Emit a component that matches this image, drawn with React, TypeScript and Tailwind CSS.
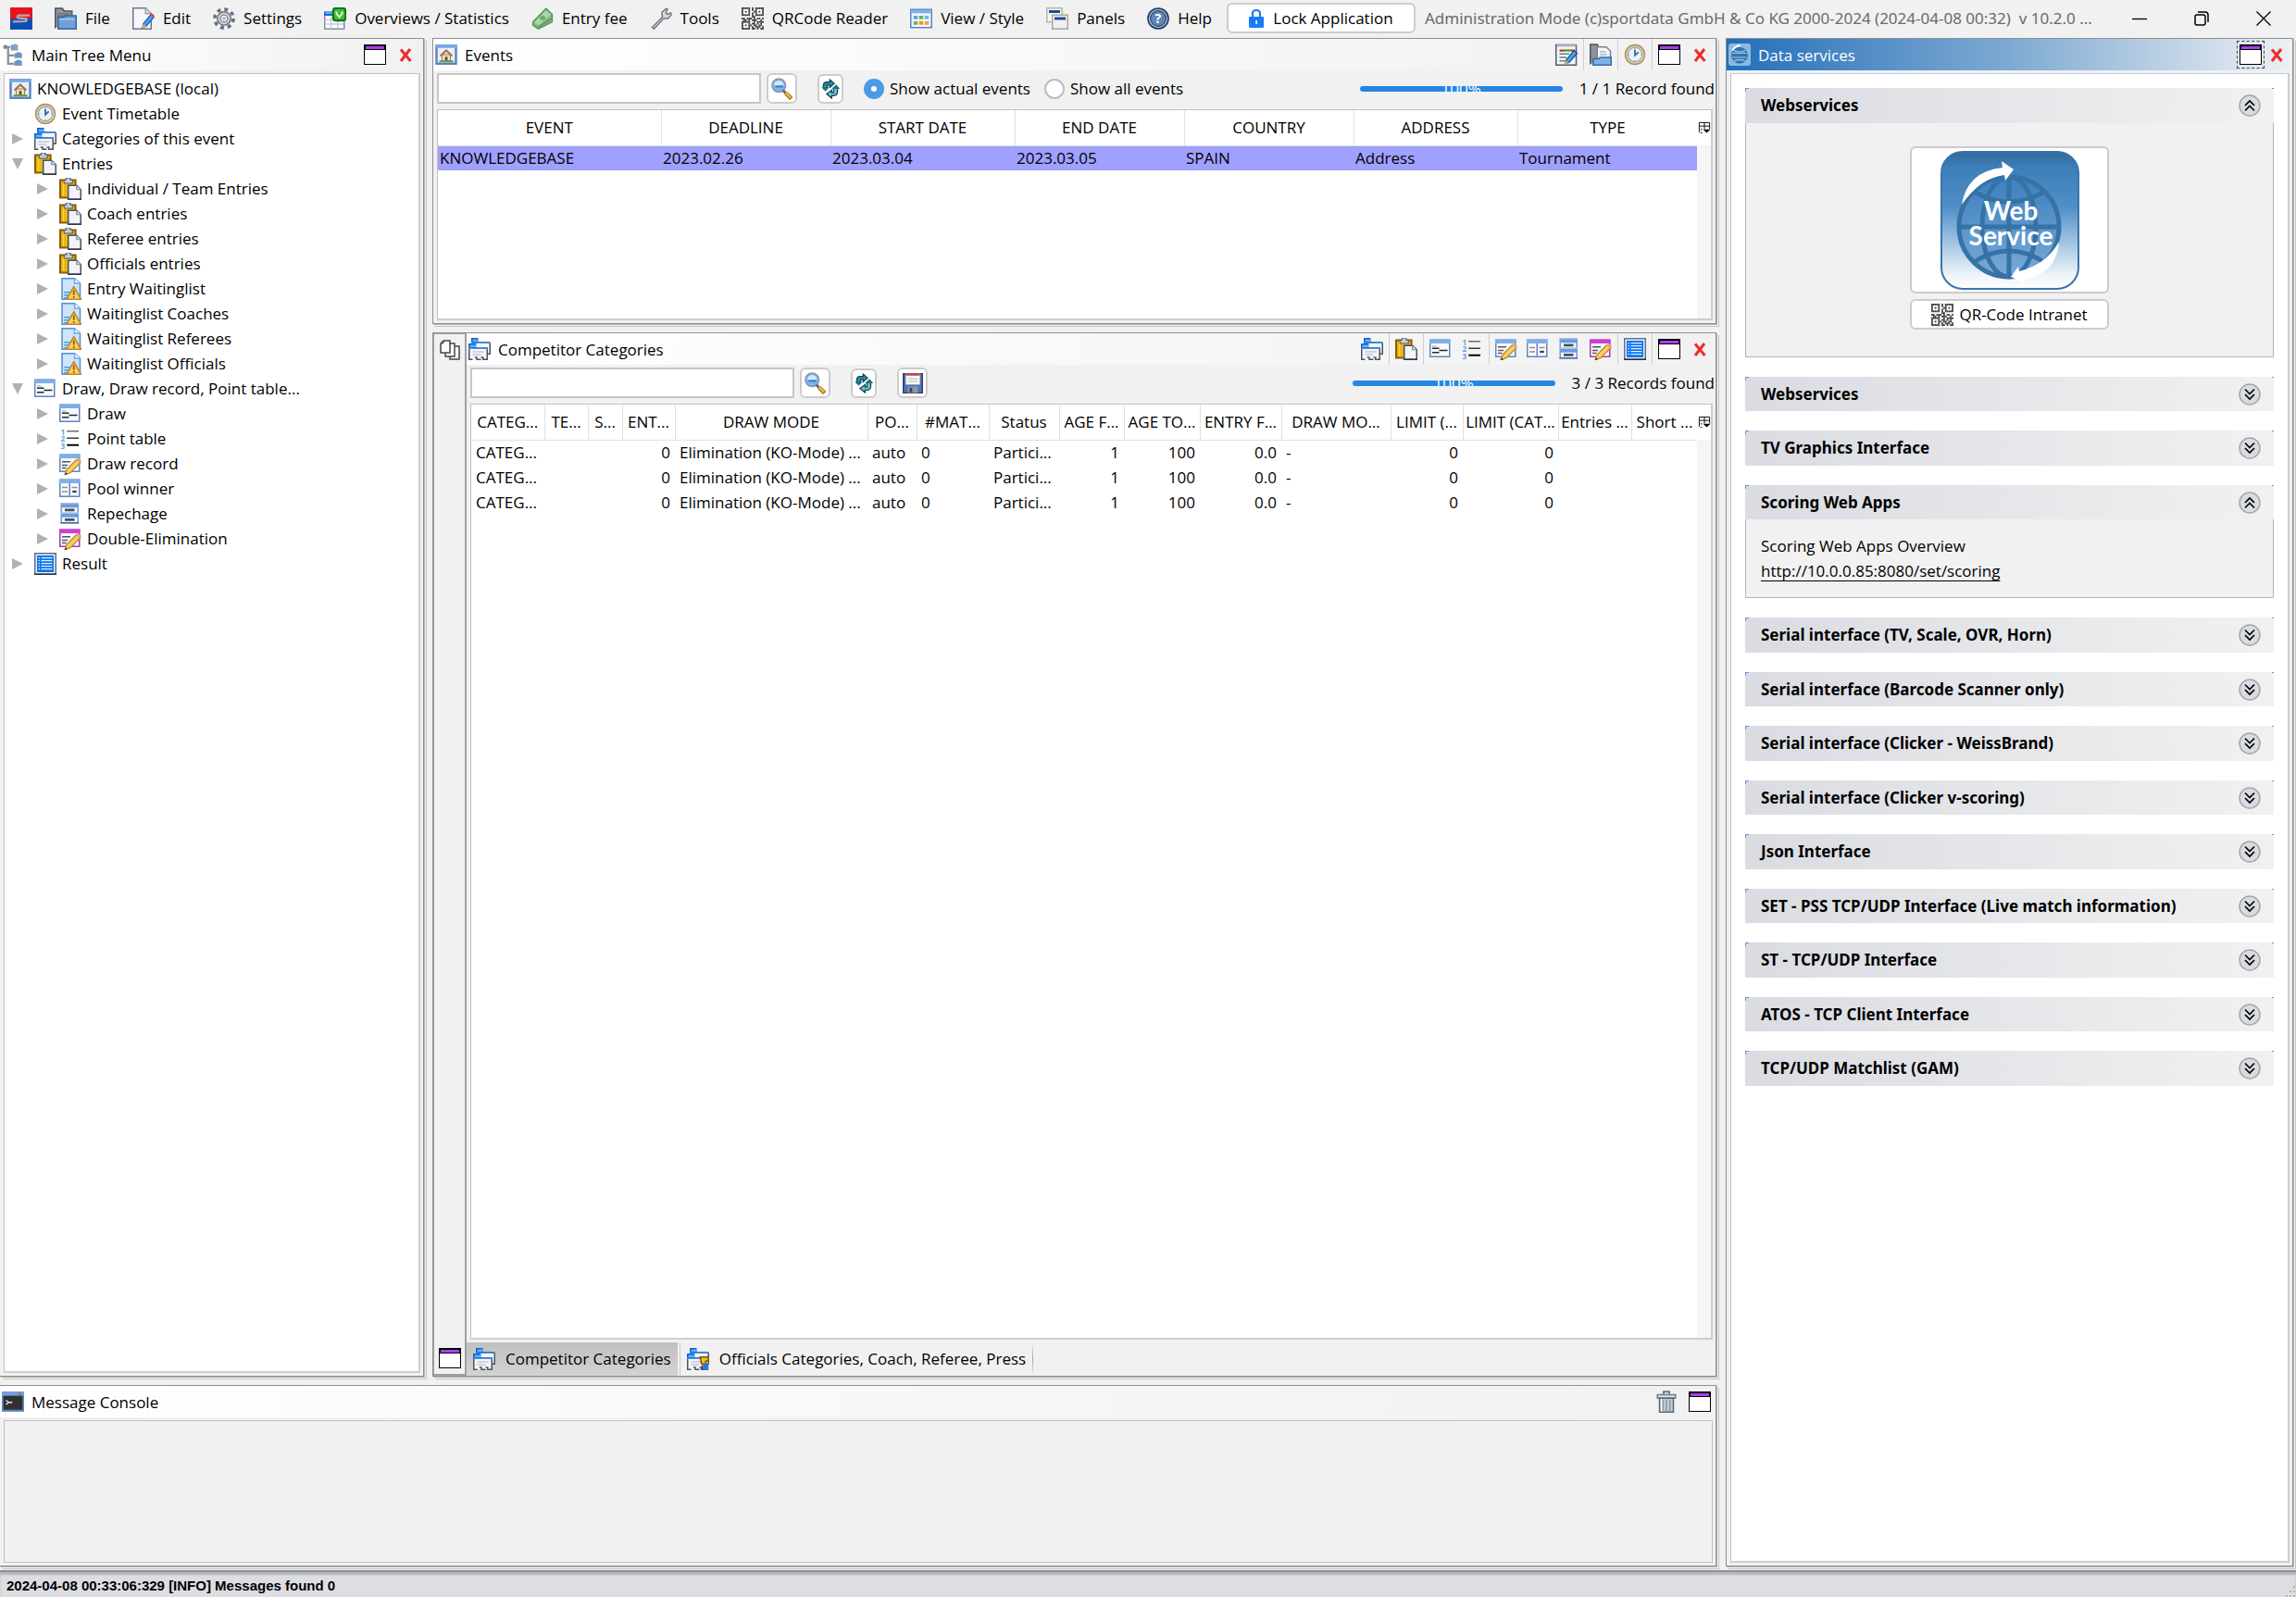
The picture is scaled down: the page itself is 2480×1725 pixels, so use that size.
import React from 'react';

type IconType = React.ComponentType;

/* ---------- icons ---------- */

const Svg = ({ children, size = 'size-6', box = '0 0 16 16' }: {
  children: React.ReactNode;
  size?: string;
  box?: string;
}) => (
  <svg viewBox={box} className={`${size} shrink-0`} aria-hidden="true">{children}</svg>
);

const LogoIcon = () => (
  <Svg>
    <rect width="16" height="8" fill="#e8141b" />
    <rect y="8" width="16" height="8" fill="#0a50b4" />
    <path d="M14 5.700 6.500 5.700Q4.500 6 5.500 7.600l6 .6Q12.500 9.200 11 10L2 10.200" fill="none" stroke="#b9a7ab" strokeWidth="1.500" />
  </Svg>
);

const FolderIcon = () => (
  <Svg>
    <path d="M.5 15V.7h5l1.500 2h5.500V6" fill="#8d949c" stroke="#4d545c" />
    <path d="M2 4.500h9M2 6h9" stroke="#6f767e" />
    <path d="M2.500 15.500V7h4l1-1h8v9.500z" fill="#6f9fd4" stroke="#37669f" />
    <path d="M3.500 8.500h11" stroke="#a9cbef" />
  </Svg>
);

const EditIcon = () => (
  <Svg>
    <path d="M.5.5h9l4 4v11H.5z" fill="#f5f7fa" stroke="#6d7684" />
    <path d="M9.500.5v4h4" fill="#d5dbe3" stroke="#9aa3b0" />
    <path d="M7 15l1-3.500L13.500 5l2 2L10 13.500z" fill="#4aa3ee" stroke="#1a5da8" strokeWidth=".8" />
    <path d="M13 5.500l1-1.300 2 1.800-1 1.400z" fill="#e0433a" />
    <path d="M6.500 15.500l1.300-3.500 2.200 1.900z" fill="#f0b04a" />
  </Svg>
);

const GearIcon = () => (
  <Svg>
    <circle cx="8" cy="8" r="6.700" fill="none" stroke="#68707c" strokeWidth="2.400" strokeDasharray="2.600 2.660" />
    <circle cx="8" cy="8" r="4.800" fill="#d3d8e0" stroke="#68707c" strokeWidth="1" />
    <circle cx="8" cy="8" r="2.600" fill="#eef1f5" stroke="#7c8591" strokeWidth=".9" />
    <circle cx="8" cy="8" r="1.200" fill="#aab2be" />
  </Svg>
);

const OverviewIcon = () => (
  <Svg>
    <path d="M.5 3.500h14v12H.5z" fill="#fff" stroke="#7f8da3" />
    <path d="M0 3h8v3H0z" fill="#1b6bd0" />
    <path d="M1 4h5" stroke="#8fc1f5" />
    <path d="M1 9h13M1 12h13M5 7v8M10 8v7" stroke="#c3cedd" />
    <rect x="6.500" y=".5" width="9" height="9" rx="2" fill="#3fb93b" stroke="#0f6d15" strokeWidth="1.300" />
    <path d="M9 3v1.500l2 2.500 2-2.500V3" fill="none" stroke="#d9ffd5" strokeWidth="1.300" />
  </Svg>
);

const FeeIcon = () => (
  <Svg>
    <path d="M1 10.500L10.500.8 15 5v5.500L5 15.500 1 13z" fill="#7fb67f" stroke="#4f8f55" strokeWidth=".8" />
    <path d="M2 10.700L10.500 2 14 5.200 5 13.200z" fill="#a9d6a5" />
    <ellipse cx="8" cy="7.500" rx="2" ry="1.700" fill="#6fa972" />
    <path d="M5 14.200l9.500-6" stroke="#4f8f55" strokeWidth=".7" />
  </Svg>
);

const WrenchIcon = () => (
  <Svg>
    <path d="M1.500 14.500L9 7 8.600 3.500 11.500 1l1.200.2-1.200 2.600 1 1.200L15 4l.4 1.400L13 8l-3-.1L3 15.500z" fill="#d6dae0" stroke="#6c727c" strokeWidth=".9" />
  </Svg>
);

const QR_ROWS = [
  '1111101011111', '1000101010001', '1010100110101', '1000101010001', '1111101011111',
  '0000001100000', '1101110101101', '0110101110010', '1111100101111', '1000101101010',
  '1010110110110', '1000101011101', '1111101101011',
];

const QrIcon = () => (
  <Svg box="0 0 13 13">
    <rect width="13" height="13" fill="#fff" />
    {QR_ROWS.map((row, y) =>
      row.split('').map((c, x) =>
        c === '1' ? <rect key={`${x}-${y}`} x={x} y={y} width="1" height="1" fill="#3a3a3a" /> : null
      )
    )}
  </Svg>
);

const ViewIcon = () => (
  <Svg>
    <rect x=".5" y="1.500" width="15" height="13" fill="#f3f7fd" stroke="#5b83c4" />
    <path d="M1 3h14" stroke="#7fb1ec" strokeWidth="2.500" />
    <path d="M2.500 6h3v2.500h-3z" fill="#5aa0e6" />
    <path d="M6.500 6h3v2.500h-3z" fill="#72ad4f" />
    <path d="M10.500 6h3v2.500h-3z" fill="#6fb6f0" />
    <path d="M2.500 10h3v2.500h-3z" fill="#6fb35a" />
    <path d="M6.500 10h3v2.500h-3z" fill="#ef8b2c" />
    <path d="M10.500 10h3v2.500h-3z" fill="#f0a13c" />
  </Svg>
);

const PanelsIcon = () => (
  <Svg>
    <rect x=".5" y=".5" width="11" height="10" fill="#f6f6f4" stroke="#b4b6a8" />
    <path d="M2 3h8" stroke="#1f4a94" strokeWidth="2" />
    <rect x="4.500" y="5.500" width="11" height="10" fill="#eef0f3" stroke="#a5a89c" />
    <path d="M6 8h8" stroke="#1f4a94" strokeWidth="2" />
  </Svg>
);

const HelpIcon = () => (
  <Svg>
    <circle cx="8" cy="8" r="7.300" fill="#cfd8e6" stroke="#27406b" strokeWidth="1.200" />
    <circle cx="8" cy="8" r="5.600" fill="#5f86bd" stroke="#27406b" strokeWidth=".8" />
    <text x="8" y="11.400" textAnchor="middle" fontSize="9.500" fontWeight="700" fill="#fff">?</text>
  </Svg>
);

const LockIcon = () => (
  <svg viewBox="0 0 16 22" className="h-[22px] w-4 shrink-0" aria-hidden="true">
    <path d="M4 10V5.500Q4 2 8 2t4 3.500V10" fill="none" stroke="#1a7cf5" strokeWidth="2.200" />
    <rect x="0" y="9" width="16" height="12" rx="1" fill="#1a7cf5" />
    <path d="M7.300 13h1.600v4H7.300z" fill="#fff" />
  </svg>
);

const TreeIcon = () => (
  <Svg>
    <path d="M4.500 2v12.500H9M4.500 8.500H9M2 2.500h4" fill="none" stroke="#8a9097" strokeWidth="1.500" />
    <circle cx="2.500" cy="2.500" r="1.500" fill="#7c838c" />
    <path d="M6.500 1h5v4h-5zM9 7h5.500v3.500H9zM9 12.500h5.500V16H9z" fill="#8b959f" />
    <circle cx="9.500" cy="2.300" r="2" fill="#7ba7d6" />
    <circle cx="12" cy="8" r="1.900" fill="#5d95d3" />
    <circle cx="12" cy="13.500" r="1.900" fill="#5d95d3" />
  </Svg>
);

const HomeIcon = () => (
  <Svg>
    <rect x="1" y="1.500" width="14" height="13" fill="#e6f1fb" stroke="#5b7fbd" strokeWidth="1.600" />
    <path d="M.2 2h15.600" stroke="#79aae6" strokeWidth="2.400" />
    <path d="M5 12.500V8h6v4.500z" fill="#f2e6cf" stroke="#a5793c" strokeWidth=".7" />
    <path d="M3.800 9L8 5l4.200 4" fill="none" stroke="#a8713f" strokeWidth="1.400" />
    <path d="M7 9.500h2v3H7z" fill="#7a4e24" />
    <path d="M3 12.800h10" stroke="#5aa355" strokeWidth="1.400" />
  </Svg>
);

const ClockIcon = () => (
  <Svg>
    <circle cx="8" cy="8" r="7" fill="#e4d2a4" stroke="#a98d5a" strokeWidth=".9" />
    <circle cx="8" cy="8" r="5.200" fill="#eaf3fb" stroke="#9aa9bd" strokeWidth=".8" />
    <path d="M8 4.500V8.500l2.500-2.300" fill="none" stroke="#44658f" strokeWidth="1.200" />
    <path d="M8 3.200v1M8 12v1M3.200 8h1M12 8h1" stroke="#7f93ad" strokeWidth=".8" />
  </Svg>
);

const FoldersBase = () => (
  <>
    <path d="M2.500 3.500h13v8h-3z" fill="#f4f6f9" />
    <path d="M15.500 3.500v8h-2" fill="none" stroke="#4b5462" />
    <path d="M2 0h5v3H2z" fill="#0d62cf" />
    <path d="M3 1h4v2H3z" fill="#57b4fb" />
    <path d="M2 3.300h13.500" stroke="#0d62cf" />
    <path d="M.5 7h13v8.500H.5z" fill="#f4f6f9" />
    <path d="M.5 8v7.500h2.500M4.500 14h1.500v1.500h3M9 14h1.500v1.500h3V8" fill="none" stroke="#4b5462" />
    <path d="M0 4h5.500v3H0z" fill="#0d62cf" />
    <path d="M1 5h4.500v2H1z" fill="#57b4fb" />
    <path d="M0 7.300h14" stroke="#0d62cf" />
    <path d="M3 10h8M3 12h6" stroke="#c0c8d3" />
  </>
);

const FoldersIcon = () => <Svg><FoldersBase /></Svg>;

const OfficialsIcon = () => (
  <Svg>
    <FoldersBase />
    <path d="M9.500 6.500h6v3h-2v2h-3z" fill="#f3c313" stroke="#7c4f0a" strokeWidth="1" />
    <path d="M11.500 11.500h4v4.500h-4z" fill="#2a76d8" />
    <path d="M11 15.500v-3" stroke="#3a424e" />
  </Svg>
);

const ClipboardIcon = () => (
  <Svg>
    <path d="M.7 1.700h11v12.600H.7z" fill="#e9b40f" stroke="#8d5c04" strokeWidth="1.400" />
    <path d="M3 3v10" stroke="#f8d54c" />
    <path d="M3.500 1.500h1.500V0h3v1.500h1.500V4h-6z" fill="#c9ced6" stroke="#586070" strokeWidth=".8" />
    <path d="M6.500 5.500h6l3 3v7h-9z" fill="#f2f4f9" stroke="#485063" />
    <path d="M12.500 5.500v3h3" fill="#d4dae4" stroke="#8089a0" strokeWidth=".8" />
    <path d="M6 15.500h10" stroke="#2e3546" />
  </Svg>
);

const WaitIcon = () => (
  <Svg>
    <path d="M2 .5h9l4 3.500v11.500H2z" fill="#cfe3fa" stroke="#4f8fcf" />
    <path d="M11 .5v3.500h4" fill="#f2f8ff" stroke="#6fa8e0" />
    <path d="M3.500 10.500h4M3.500 12.500h3M3.500 14.500h2" stroke="#35a0e8" />
    <path d="M10.500 6.500L15.700 15.500H5.200z" fill="#f7d164" stroke="#c08424" />
    <path d="M10.500 9v3.500M10.500 13.300v1.200" stroke="#8c5f12" strokeWidth="1.200" />
  </Svg>
);

const WinFrame = ({ pink = false }: { pink?: boolean }) => (
  <>
    <rect x=".5" y="1.500" width="14" height="12" fill="#f8fafd" stroke={pink ? '#a63aa6' : '#6183c4'} />
    <path d="M0 2.500h15" stroke={pink ? '#cf3fd0' : '#80aee6'} strokeWidth="3" />
  </>
);

const Pencil = () => (
  <>
    <path d="M4 15.700L5.500 12 12.500 5l2.700 2.200L8 14.500z" fill="#f6cf61" stroke="#c08a3c" strokeWidth=".9" />
    <path d="M12 5.300l1.500-1.300 2.500 1.800-1 1.600z" fill="#e7a67a" />
    <path d="M4 16l.7-1.700L6 15.500z" fill="#3a2a14" />
  </>
);

const DrawIcon = () => (
  <Svg>
    <WinFrame />
    <path d="M2 7.500h5M2 10.500h5M7 9h6" stroke="#23282f" strokeWidth=".9" />
    <path d="M2 6h3" stroke="#a8aeb8" strokeWidth=".8" />
  </Svg>
);

const ListIcon = () => (
  <Svg>
    <text x="1" y="5" fontSize="5.500" fontWeight="700" fill="#6a9fdf">1</text>
    <text x="1" y="10" fontSize="5.500" fontWeight="700" fill="#6a9fdf">2</text>
    <text x="1" y="15" fontSize="5.500" fontWeight="700" fill="#6a9fdf">3</text>
    <path d="M5.500 2.500H14" stroke="#6a6a6a" />
    <path d="M5.500 7.500H14" stroke="#3c3c3c" />
    <path d="M5.500 12.500H14" stroke="#000" strokeWidth="1.300" />
  </Svg>
);

const RecordIcon = () => (
  <Svg>
    <WinFrame />
    <path d="M2 6.500h6M2 9h4M2 11h3" stroke="#50565f" />
    <Pencil />
  </Svg>
);

const PoolIcon = () => (
  <Svg>
    <WinFrame />
    <path d="M7.500 4v9" stroke="#6183c4" />
    <path d="M2 7h4M2 10h4M9 7h4" stroke="#8b9098" />
    <path d="M9.500 10h3" stroke="#3b3f46" strokeWidth="1.500" />
  </Svg>
);

const RepechageIcon = () => (
  <Svg>
    <rect x="1" y="0" width="13" height="15" fill="#6e9bd8" />
    <path d="M1 .5h13M1 7.500h13" stroke="#9cc2ef" />
    <path d="M2 3.500h11V7H2zM2 10.500h11V14H2z" fill="#f4f8fd" />
    <path d="M4 5.200h7M4 12.200h7" stroke="#4a4e55" strokeWidth="1.800" />
    <path d="M1 14.500h13" stroke="#4466a8" />
  </Svg>
);

const DoubleIcon = () => (
  <Svg>
    <WinFrame pink />
    <path d="M2 6.500h6M2 9h4M2 11h3" stroke="#50565f" />
    <Pencil />
  </Svg>
);

const ResultIcon = () => (
  <Svg>
    <rect x=".5" y=".5" width="15" height="15" fill="#e8f1fb" stroke="#5f6f86" />
    <path d="M0 15.500h16" stroke="#26303f" />
    <rect x="2" y="2" width="12" height="12" fill="#0b74ef" />
    <path d="M5 3.700h8M5 5.700h8M5 7.700h8M5 9.700h8M5 11.700h8" stroke="#e2f0ff" strokeWidth=".8" />
    <path d="M3 3.700h1M3 5.700h1M3 7.700h1M3 9.700h1M3 11.700h1" stroke="#e2f0ff" strokeWidth=".8" />
  </Svg>
);

const WindowIcon = () => (
  <svg viewBox="0 0 24 22" className="h-[22px] w-6 shrink-0" aria-hidden="true">
    <rect width="24" height="22" fill="#000" />
    <rect x="2" y="2" width="20" height="3" fill="#ae3cf0" />
    <rect x="1" y="6" width="22" height="15" fill="#fff" />
  </svg>
);

const CloseIcon = () => (
  <svg viewBox="0 0 14 15" className="h-[15px] w-3.5 shrink-0" aria-hidden="true">
    <path d="M2 1.500l10.500 12.500M12 1L2 14" stroke="#ee2b2b" strokeWidth="3" />
  </svg>
);

const TableEditIcon = () => (
  <Svg>
    <rect x=".5" y="1" width="14.500" height="14.500" fill="#f2f5f9" stroke="#4e5a6b" />
    <path d="M1 1.500h14" stroke="#aab4c2" strokeWidth="1.500" />
    <path d="M3 5h3M11 5h3" stroke="#d5281f" strokeWidth="1.500" />
    <path d="M6 5h5" stroke="#2fa32b" strokeWidth="1.500" />
    <path d="M3 7.500h7M3 10h5M3 12.500h4" stroke="#6b7789" />
    <path d="M7 14.500l1-3L13.500 5 15.700 7 10 13.500z" fill="#49a2ee" stroke="#174f93" strokeWidth=".8" />
    <path d="M6 15.500l1.500-3 1.700 1.500z" fill="#f0b04a" />
  </Svg>
);

const FolderDocIcon = () => (
  <Svg>
    <path d="M.5 15V.7h5l1 2h4V9" fill="#8d949c" stroke="#4d545c" />
    <path d="M5.500 2.500h6.500l3 3V12H5.500z" fill="#f3f5f8" stroke="#7b8492" />
    <path d="M7.500 6h4M7.500 8h5" stroke="#aab2bd" />
    <path d="M2.500 15.500V11h4l1-1h8v5.500z" fill="#7fb0e6" stroke="#3a6aa6" />
  </Svg>
);

const StackIcon = () => (
  <svg viewBox="0 0 22 22" className="size-[22px] shrink-0" aria-hidden="true">
    <path d="M11 7h10v14H11z" fill="#fff" stroke="#444" strokeWidth="1.500" />
    <path d="M6 4h10v14H6z" fill="#fff" stroke="#444" strokeWidth="1.500" />
    <path d="M4 1h7v13H1V4z" fill="#fff" stroke="#444" strokeWidth="1.500" />
    <path d="M1 4h3V1" fill="none" stroke="#444" />
  </svg>
);

const ColumnsIcon = () => (
  <svg viewBox="0 0 15 15" className="size-3.5 shrink-0" aria-hidden="true">
    <path d="M1.500 13V1.500h12V9M1.500 5.500h12M7.500 1.500V9M3 9.500h2M3 13.500h2" fill="none" stroke="#000" />
    <path d="M6 9.500h8.500l-4.300 4z" fill="#000" />
  </svg>
);

const SearchIcon = () => (
  <Svg>
    <circle cx="5.500" cy="5.500" r="4.800" fill="#7fb2f0" stroke="#8d97ad" strokeWidth="1.200" />
    <path d="M2 5.500a3.500 3.500 0 0 1 7 0z" fill="#d6e8fb" />
    <path d="M3 6.300h5.500" stroke="#2f78d8" strokeWidth="1.200" />
    <path d="M8.500 9l2 2.200" stroke="#5b6377" strokeWidth="2" />
    <path d="M10.500 11l4 4" stroke="#9b6a10" strokeWidth="3" />
    <path d="M10.500 10.800l3.600 3.700" stroke="#f2c234" strokeWidth="1.600" />
  </Svg>
);

const RefreshIcon = () => (
  <Svg size="size-[22px]">
    <path d="M2.500 8V4.500Q3 2.700 5 2.700h2.500V.8l3.500 3-3.500 3V5H5.500v3z" fill="#2d8ca3" stroke="#0c4250" strokeWidth=".9" />
    <path d="M13.500 7v3.500q-.5 2.800-2.500 2.800H9v2L5 12l4-3v2h1.500V7z" fill="#6fc3d2" stroke="#0c4250" strokeWidth=".9" />
    <path d="M1 6.500h6L4 10z" fill="#1d6f85" />
    <path d="M9 8l3.500-3.500L15.500 8z" fill="#1d6f85" />
  </Svg>
);

const FloppyIcon = () => (
  <Svg size="size-[22px]">
    <rect x=".5" y=".5" width="15" height="15" fill="#5273b4" stroke="#2c3b66" />
    <rect x="2.500" y="0" width="11" height="9" fill="#fbfbfb" />
    <path d="M2.500 1h11" stroke="#b44c4c" strokeWidth="2" />
    <path d="M4 4.500h8M4 6.500h8" stroke="#c8ccd2" />
    <rect x="4" y="10.500" width="8" height="5" fill="#8d95a5" />
    <rect x="5.500" y="11.500" width="2" height="3.500" fill="#38435c" />
  </Svg>
);

const TerminalIcon = () => (
  <Svg>
    <rect x=".5" y="1.500" width="15" height="13" fill="#303030" stroke="#5b83c4" strokeWidth="1.400" />
    <path d="M0 2.500h16" stroke="#6f9fdd" strokeWidth="2.500" />
    <circle cx="13" cy="2.500" r=".8" fill="#e2503c" />
    <path d="M3 7l2 1.500L3 10M5.500 8.500h2" fill="none" stroke="#ededed" strokeWidth=".9" />
  </Svg>
);

const TrashIcon = () => (
  <Svg>
    <path d="M6 2.500V.8h4v1.700" fill="none" stroke="#6c7683" strokeWidth="1.300" />
    <path d="M1.500 3h13v2.500h-13z" fill="#dde3ea" stroke="#6f7a88" />
    <path d="M3 5.500h10V15.500H3z" fill="#c2ccd7" stroke="#5b6675" />
    <path d="M5.500 6.500v8M8 6.500v8M10.500 6.500v8" stroke="#8d9bab" strokeWidth="1.100" />
    <path d="M4.400 6v9" stroke="#f4f7fa" />
  </Svg>
);

const GlobeIcon = () => (
  <Svg>
    <rect width="16" height="16" rx="2" fill="#8db9e0" />
    <circle cx="8" cy="8.500" r="6" fill="#2f74b3" />
    <path d="M3 7h10M3 10h10M4 5.200q4 1.600 8 0M4 12.500q4-1.600 8 0" fill="none" stroke="#a7cbeb" strokeWidth=".8" />
    <path d="M3 5Q4.500 1.500 8.500 1.500" fill="none" stroke="#fff" strokeWidth="1.300" />
  </Svg>
);

const WebServiceLogo = () => (
  <svg viewBox="0 0 150 150" className="size-[150px]" role="img" aria-label="Web Service">
    <defs>
      <linearGradient id="sky" x1="0" y1="0" x2="0" y2="1">
        <stop offset="0" stopColor="#35699b" />
        <stop offset=".12" stopColor="#3d7fba" />
        <stop offset=".4" stopColor="#4f8fc8" />
        <stop offset=".9" stopColor="#eef4fa" />
        <stop offset="1" stopColor="#fff" />
      </linearGradient>
      <linearGradient id="sea" x1="0" y1="0" x2="0" y2="1">
        <stop offset="0" stopColor="#3c7fbd" />
        <stop offset="1" stopColor="#7aa9d8" />
      </linearGradient>
    </defs>
    <rect x="1" y="1" width="148" height="148" rx="23" fill="url(#sky)" stroke="#3a74aa" strokeWidth="2" />
    <circle cx="74" cy="82" r="54" fill="url(#sea)" stroke="#3572a6" strokeWidth="5" />
    <g fill="none" stroke="#3572a6" strokeWidth="5">
      <path d="M74 28v108M20 82h108" />
      <path d="M36 44q38 22 76 0M36 120q38-24 76 0" />
      <ellipse cx="74" cy="82" rx="29" ry="54" />
    </g>
    <path d="M23 58Q29 22 67 18l-1-7 13 9-9 12-1-6Q43 29 23 58z" fill="#fff" />
    <path d="M128 98q-2 34-38 41l1 4-15-7 8-11 1 5q29-7 43-32z" fill="#fff" />
    <text textAnchor="middle" fontFamily="Lato, sans-serif" fontSize="28" fontWeight="700" fill="#fff">
      <tspan x="76" y="75">Web</tspan>
      <tspan x="76" y="102">Service</tspan>
    </text>
  </svg>
);

const ChevronBadge = ({ open }: { open: boolean }) => (
  <svg viewBox="0 0 24 24" className="size-6 shrink-0" aria-hidden="true">
    <circle cx="12" cy="12" r="11" fill="#d9dbe2" stroke="#a6a6a8" strokeWidth="1.500" />
    <path
      d={open ? 'M7 12l5-5 5 5M7 17.500l5-5 5 5' : 'M7 6.500l5 5 5-5M7 12l5 5 5-5'}
      fill="none"
      stroke="#000"
      strokeWidth="1.700"
    />
  </svg>
);

/* ---------- data ---------- */

const menuItems: { label: string; icon: IconType }[] = [
  { label: 'File', icon: FolderIcon },
  { label: 'Edit', icon: EditIcon },
  { label: 'Settings', icon: GearIcon },
  { label: 'Overviews / Statistics', icon: OverviewIcon },
  { label: 'Entry fee', icon: FeeIcon },
  { label: 'Tools', icon: WrenchIcon },
  { label: 'QRCode Reader', icon: QrIcon },
  { label: 'View / Style', icon: ViewIcon },
  { label: 'Panels', icon: PanelsIcon },
  { label: 'Help', icon: HelpIcon },
];

const treeNodes: { label: string; icon: IconType; level: number; state: 'open' | 'closed' | 'leaf' }[] = [
  { label: 'KNOWLEDGEBASE (local)', icon: HomeIcon, level: 0, state: 'leaf' },
  { label: 'Event Timetable', icon: ClockIcon, level: 1, state: 'leaf' },
  { label: 'Categories of this event', icon: FoldersIcon, level: 1, state: 'closed' },
  { label: 'Entries', icon: ClipboardIcon, level: 1, state: 'open' },
  { label: 'Individual / Team Entries', icon: ClipboardIcon, level: 2, state: 'closed' },
  { label: 'Coach entries', icon: ClipboardIcon, level: 2, state: 'closed' },
  { label: 'Referee entries', icon: ClipboardIcon, level: 2, state: 'closed' },
  { label: 'Officials entries', icon: ClipboardIcon, level: 2, state: 'closed' },
  { label: 'Entry Waitinglist', icon: WaitIcon, level: 2, state: 'closed' },
  { label: 'Waitinglist Coaches', icon: WaitIcon, level: 2, state: 'closed' },
  { label: 'Waitinglist Referees', icon: WaitIcon, level: 2, state: 'closed' },
  { label: 'Waitinglist Officials', icon: WaitIcon, level: 2, state: 'closed' },
  { label: 'Draw, Draw record, Point table...', icon: DrawIcon, level: 1, state: 'open' },
  { label: 'Draw', icon: DrawIcon, level: 2, state: 'closed' },
  { label: 'Point table', icon: ListIcon, level: 2, state: 'closed' },
  { label: 'Draw record', icon: RecordIcon, level: 2, state: 'closed' },
  { label: 'Pool winner', icon: PoolIcon, level: 2, state: 'closed' },
  { label: 'Repechage', icon: RepechageIcon, level: 2, state: 'closed' },
  { label: 'Double-Elimination', icon: DoubleIcon, level: 2, state: 'closed' },
  { label: 'Result', icon: ResultIcon, level: 1, state: 'closed' },
];

const levelIndent = ['pl-[5px]', 'pl-[7px]', 'pl-[34px]'];

interface Column {
  title: string;
  width: number;
  right?: boolean;
}

const eventColumns: Column[] = [
  { title: 'EVENT', width: 241 },
  { title: 'DEADLINE', width: 183 },
  { title: 'START DATE', width: 199 },
  { title: 'END DATE', width: 183 },
  { title: 'COUNTRY', width: 183 },
  { title: 'ADDRESS', width: 177 },
  { title: 'TYPE', width: 195 },
];

const eventRows = [
  ['KNOWLEDGEBASE', '2023.02.26', '2023.03.04', '2023.03.05', 'SPAIN', 'Address', 'Tournament'],
];

const categoryColumns: Column[] = [
  { title: 'CATEG...', width: 79 },
  { title: 'TE...', width: 47 },
  { title: 'S...', width: 37 },
  { title: 'ENT...', width: 57, right: true },
  { title: 'DRAW MODE', width: 208 },
  { title: 'PO...', width: 53 },
  { title: '#MAT...', width: 78 },
  { title: 'Status', width: 76 },
  { title: 'AGE F...', width: 70, right: true },
  { title: 'AGE TO...', width: 82, right: true },
  { title: 'ENTRY F...', width: 88, right: true },
  { title: 'DRAW MO...', width: 118 },
  { title: 'LIMIT (...', width: 78, right: true },
  { title: 'LIMIT (CAT...', width: 103, right: true },
  { title: 'Entries ...', width: 79 },
  { title: 'Short ...', width: 72 },
];

const categoryRow = [
  'CATEG...', '', '', '0', 'Elimination (KO-Mode) ...', 'auto', '0', 'Partici...',
  '1', '100', '0.0', '-', '0', '0', '', '',
];
const categoryRows = [categoryRow, categoryRow, categoryRow];

const closedServices = [
  'Serial interface (TV, Scale, OVR, Horn)',
  'Serial interface (Barcode Scanner only)',
  'Serial interface (Clicker - WeissBrand)',
  'Serial interface (Clicker v-scoring)',
  'Json Interface',
  'SET - PSS TCP/UDP Interface (Live match information)',
  'ST - TCP/UDP Interface',
  'ATOS - TCP Client Interface',
  'TCP/UDP Matchlist (GAM)',
];

/* ---------- shared parts ---------- */

const panelClass =
  'flex flex-col border border-[#8f8f8f] bg-[#f1f1f1] shadow-[1px_1px_0_#b4b4b4,2px_2px_0_#f4f4f4,3px_3px_0_#c4c4c4]';
const wellClass = 'border border-b-2 border-r-2 border-[#c2c2c2] border-b-[#cdcdcd] border-r-[#cdcdcd]';

const IconButton = ({ label, icon: Icon }: { label: string; icon: IconType }) => (
  <button type="button" aria-label={label} className="flex items-center justify-center">
    <Icon />
  </button>
);

const Separator = () => <span className="h-full w-px bg-[#cfcfcf]" />;

const PanelHeader = ({ title, icon: Icon, children, active = false, end = 'pr-2.5' }: {
  title: string;
  icon: IconType;
  children?: React.ReactNode;
  active?: boolean;
  end?: string;
}) => (
  <header
    className={`flex h-[34px] shrink-0 items-center pl-0.5 ${end} ${
      active
        ? 'bg-linear-to-r from-[#1f6fba] via-[#7eaad2] to-[#eef0f2] text-white'
        : 'bg-linear-to-r from-white to-[#f1f1f1]'
    }`}
  >
    <Icon />
    <h2 className="ml-2 flex-1 whitespace-nowrap pt-px">{title}</h2>
    <div className="flex h-full items-center gap-1.5">{children}</div>
  </header>
);

const SearchBox = () => (
  <>
    <input type="text" aria-label="Search" className="h-[33px] w-[350px] border-2 border-[#c6c6c6] bg-white px-2" />
    <button type="button" aria-label="Start search" className="ml-1.5 flex h-[33px] w-[33px] items-center justify-center rounded-md border-2 border-[#cccccc] bg-white">
      <SearchIcon />
    </button>
    <button type="button" aria-label="Refresh" className="ml-[22px] flex h-8 w-7 items-center justify-center rounded-md border-2 border-[#cccccc] bg-white">
      <RefreshIcon />
    </button>
  </>
);

const LoadBar = ({ text }: { text: string }) => (
  <div className="ml-auto flex items-center gap-[18px] whitespace-nowrap">
    <div
      role="progressbar"
      aria-valuenow={100}
      className="flex h-1.5 w-[219px] items-center justify-center overflow-hidden rounded-full bg-[#2386e2] text-white"
    >
      100%
    </div>
    <span>{text}</span>
  </div>
);

const DataTable = ({ columns, rows, cellClass, rowClass }: {
  columns: Column[];
  rows: string[][];
  cellClass: string;
  rowClass: string;
}) => (
  <div className={`ml-1 mr-[3px] flex min-h-0 flex-1 bg-white ${wellClass}`}>
    <div className="min-w-0 flex-1 overflow-hidden">
      <table className="w-full table-fixed border-collapse">
        <colgroup>
          {columns.map((col) => (
            <col key={col.title} style={{ width: col.width }} />
          ))}
        </colgroup>
        <thead>
          <tr className="h-[38px] border-b border-[#e2e2e2]">
            {columns.map((col) => (
              <th key={col.title} className="overflow-hidden whitespace-nowrap border-r border-[#e0e0e0] p-0 text-center font-normal">
                {col.title}
              </th>
            ))}
          </tr>
        </thead>
        <tbody>
          {rows.map((row, i) => (
            <tr key={i} className={`h-[27px] ${rowClass}`}>
              {row.map((cell, j) => (
                <td key={j} className={`overflow-hidden whitespace-nowrap py-0 ${cellClass} ${columns[j].right ? 'text-right' : ''}`}>
                  {cell}
                </td>
              ))}
            </tr>
          ))}
        </tbody>
      </table>
    </div>
    <div className="w-[15px] bg-[#f5f5f5]">
      <button type="button" aria-label="Column settings" className="flex h-[38px] w-full items-center justify-center bg-white">
        <ColumnsIcon />
      </button>
    </div>
  </div>
);

const Radio = ({ label, checked }: { label: string; checked: boolean }) => (
  <label className="flex items-center gap-1.5">
    <input
      type="radio"
      name="event-filter"
      defaultChecked={checked}
      className="size-[22px] appearance-none rounded-full border-2 border-[#bdbdbd] bg-white checked:border-8 checked:border-[#4b9ae5]"
    />
    {label}
  </label>
);

const Service = ({ title, children }: { title: string; children?: React.ReactNode }) => (
  <section className="even:[&>h3]:h-[37px]">
    <h3 className="h-[38px]">
      <button
        type="button"
        aria-expanded={!!children}
        className="relative flex h-full w-full items-center justify-between bg-linear-to-r from-[#dadce2] to-[#f1f1f1] pl-[17px] pr-3.5 font-['Noto_Sans','Open_Sans',sans-serif] font-bold"
      >
        <span className="absolute left-0 top-0 size-1 border-l border-t border-[#6d8fdc]" />
        <span className="absolute right-0 top-0 h-px w-0.5 bg-[#6d8fdc]" />
        {title}
        <ChevronBadge open={!!children} />
      </button>
    </h3>
    {children && <div className="border border-t-0 border-[#b4b4b4] bg-[#f1f1f1]">{children}</div>}
  </section>
);

/* ---------- page areas ---------- */

const MenuBar = () => (
  <nav className="flex h-[41px] shrink-0 items-center pb-0.5 pl-[11px] pr-[27px]">
    <LogoIcon />
    <div className="ml-6 flex items-center gap-6">
      {menuItems.map(({ label, icon: Icon }) => (
        <button key={label} type="button" className="flex items-center gap-[9px] whitespace-nowrap">
          <Icon />
          {label}
        </button>
      ))}
    </div>
    <button type="button" className="ml-4 flex h-[33px] w-[204px] shrink-0 items-center justify-center gap-2.5 whitespace-nowrap rounded-md border-2 border-[#cccccc] bg-white">
      <LockIcon />
      Lock Application
    </button>
    <p className="ml-2.5 flex-1 whitespace-pre font-['Noto_Sans','Open_Sans',sans-serif] text-[#6a6a6a]">
      Administration Mode (c)sportdata GmbH &amp; Co KG 2000-2024 (2024-04-08 00:32)  v 10.2.0 ...
    </p>
    <div className="flex items-center gap-[51px]">
      <button type="button" aria-label="Minimize">
        <svg viewBox="0 0 16 16" className="size-4"><path d="M0 8.500h16" stroke="#000" strokeWidth="1.300" /></svg>
      </button>
      <button type="button" aria-label="Restore">
        <svg viewBox="0 0 16 16" className="size-4">
          <rect x="1" y="4" width="11" height="11" rx="2" fill="none" stroke="#000" strokeWidth="1.500" />
          <path d="M4 1h8q3 0 3 3v8" fill="none" stroke="#000" strokeWidth="1.500" />
        </svg>
      </button>
      <button type="button" aria-label="Close">
        <svg viewBox="0 0 16 16" className="size-4"><path d="M.5.5l15 15M15.500.5l-15 15" stroke="#000" strokeWidth="1.300" /></svg>
      </button>
    </div>
  </nav>
);

const TreePanel = () => (
  <aside className={`w-[458px] shrink-0 border-l-0 ${panelClass}`}>
    <PanelHeader title="Main Tree Menu" icon={TreeIcon} end="pr-3">
      <IconButton label="Maximize" icon={WindowIcon} />
      <span className="w-0.5" />
      <IconButton label="Close" icon={CloseIcon} />
    </PanelHeader>
    <ul className={`my-[3px] ml-1 mr-[3px] flex-1 bg-white py-0.5 ${wellClass}`}>
      {treeNodes.map(({ label, icon: Icon, level, state }) => (
        <li key={label} className={`flex h-[27px] items-center whitespace-nowrap ${levelIndent[level]}`}>
          {level > 0 && (
            <span className="mr-3 flex w-[13px] justify-center">
              {state !== 'leaf' && (
                <svg viewBox="0 0 12 12" className="size-3 shrink-0" aria-hidden="true">
                  <path d={state === 'open' ? 'M0 0h12L6 12z' : 'M0 0l12 6L0 12z'} fill="#b1b1b1" />
                </svg>
              )}
            </span>
          )}
          <Icon />
          <span className="ml-1.5">{label}</span>
        </li>
      ))}
    </ul>
  </aside>
);

const EventsPanel = () => (
  <section className={`h-[309px] shrink-0 ${panelClass}`}>
    <PanelHeader title="Events" icon={HomeIcon}>
      <IconButton label="Edit event" icon={TableEditIcon} />
      <Separator />
      <IconButton label="Open event" icon={FolderDocIcon} />
      <Separator />
      <IconButton label="Timetable" icon={ClockIcon} />
      <Separator />
      <IconButton label="Maximize" icon={WindowIcon} />
      <span className="w-0.5" />
      <IconButton label="Close" icon={CloseIcon} />
    </PanelHeader>
    <div className="mb-1.5 mt-[3px] flex h-[33px] shrink-0 items-center pl-1 pr-px">
      <SearchBox />
      <div className="ml-[22px] flex items-center gap-[15px] whitespace-nowrap">
        <Radio label="Show actual events" checked />
        <Radio label="Show all events" checked={false} />
      </div>
      <LoadBar text="1 / 1 Record found" />
    </div>
    <DataTable columns={eventColumns} rows={eventRows} cellClass="px-0.5" rowClass="bg-[#a0a0ff]" />
    <div className="h-[3px] shrink-0" />
  </section>
);

const CategoriesPanel = () => (
  <section className={`min-h-0 flex-1 ${panelClass}`}>
    <div className="flex min-h-0 flex-1">
      <div className="flex w-9 shrink-0 flex-col items-center justify-between border-2 border-l border-t border-[#a0a0a0] py-1.5">
        <IconButton label="Tab list" icon={StackIcon} />
        <IconButton label="Maximize" icon={WindowIcon} />
      </div>
      <div className="flex min-w-0 flex-1 flex-col">
        <PanelHeader title="Competitor Categories" icon={FoldersIcon}>
          <IconButton label="Categories" icon={FoldersIcon} />
          <Separator />
          <IconButton label="Entries" icon={ClipboardIcon} />
          <Separator />
          <div className="flex items-center gap-2.5">
            <IconButton label="Draw" icon={DrawIcon} />
            <IconButton label="Point table" icon={ListIcon} />
          </div>
          <Separator />
          <div className="flex items-center gap-2.5">
            <IconButton label="Draw record" icon={RecordIcon} />
            <IconButton label="Pool winner" icon={PoolIcon} />
            <IconButton label="Repechage" icon={RepechageIcon} />
            <IconButton label="Double-Elimination" icon={DoubleIcon} />
          </div>
          <Separator />
          <IconButton label="Result" icon={ResultIcon} />
          <Separator />
          <IconButton label="Maximize" icon={WindowIcon} />
          <span className="w-0.5" />
          <IconButton label="Close" icon={CloseIcon} />
        </PanelHeader>
        <div className="mb-1.5 mt-[3px] flex h-[33px] shrink-0 items-center pl-1 pr-px">
          <SearchBox />
          <button type="button" aria-label="Save" className="ml-[22px] flex h-[33px] w-[33px] items-center justify-center rounded-md border-2 border-[#cccccc] bg-white">
            <FloppyIcon />
          </button>
          <LoadBar text="3 / 3 Records found" />
        </div>
        <DataTable columns={categoryColumns} rows={categoryRows} cellClass="px-[5px]" rowClass="" />
        <div role="tablist" className="mt-[3px] flex h-9 shrink-0 whitespace-nowrap">
          <button type="button" role="tab" aria-selected="true" className="flex items-center gap-[11px] bg-linear-to-b from-[#c0c0c0] to-[#d3d3d3] px-[7px]">
            <FoldersIcon />
            Competitor Categories
          </button>
          <span className="ml-0.5 w-px bg-[#c9c9c9]" />
          <button type="button" role="tab" aria-selected="false" className="flex items-center gap-[11px] px-[7px]">
            <OfficialsIcon />
            Officials Categories, Coach, Referee, Press
          </button>
          <span className="w-px bg-linear-to-b from-[#f1f1f1] via-[#a0a0a0] to-[#f1f1f1]" />
        </div>
      </div>
    </div>
  </section>
);

const ConsolePanel = () => (
  <section className={`h-[196px] shrink-0 border-l-0 ${panelClass}`}>
    <PanelHeader title="Message Console" icon={TerminalIcon} end="pr-[5px]">
      <IconButton label="Clear" icon={TrashIcon} />
      <span />
      <IconButton label="Maximize" icon={WindowIcon} />
    </PanelHeader>
    <div className="m-[3px] ml-1 flex-1 border border-[#c2c2c2]" />
  </section>
);

const DataServicesPanel = () => (
  <aside className={`mr-[3px] w-[613px] shrink-0 ${panelClass}`}>
    <PanelHeader title="Data services" icon={GlobeIcon} active>
      <button type="button" aria-label="Maximize" className="flex h-[30px] w-[30px] items-center justify-center border border-dashed border-[#3c444c] bg-[#dfe6ec]">
        <WindowIcon />
      </button>
      <IconButton label="Close" icon={CloseIcon} />
    </PanelHeader>
    <div className={`m-[3px] ml-1 flex flex-1 flex-col gap-[21px] border-t-[#b8c8ec] bg-white px-[15px] pt-[15px] ${wellClass}`}>
      <Service title="Webservices">
        <div className="mx-auto flex w-[215px] flex-col gap-1.5 pb-[29px] pt-[25px]">
          <button type="button" className="flex h-[159px] items-center justify-center rounded-md border-2 border-[#cccccc] bg-white">
            <WebServiceLogo />
          </button>
          <button type="button" className="flex h-[33px] items-center justify-center gap-1.5 whitespace-nowrap rounded-md border-2 border-[#cccccc] bg-white">
            <QrIcon />
            QR-Code Intranet
          </button>
        </div>
      </Service>
      <Service title="Webservices" />
      <Service title="TV Graphics Interface" />
      <Service title="Scoring Web Apps">
        <div className="px-4 py-[15px] leading-[27px]">
          <p>Scoring Web Apps Overview</p>
          <a href="http://10.0.0.85:8080/set/scoring" className="underline underline-offset-4">
            http://10.0.0.85:8080/set/scoring
          </a>
        </div>
      </Service>
      {closedServices.map((title) => (
        <Service key={title} title={title} />
      ))}
    </div>
  </aside>
);

export default function App() {
  return (
    <div className="flex h-screen flex-col overflow-hidden bg-[#f1f1f1] font-['Open_Sans','Noto_Sans',sans-serif] text-[17px] leading-6 text-black">
      <MenuBar />
      <main className="flex min-h-0 flex-1 gap-[10px] pb-1">
        <div className="flex min-w-0 flex-1 flex-col gap-[9px]">
          <div className="flex min-h-0 flex-1 gap-[9px]">
            <TreePanel />
            <div className="flex min-w-0 flex-1 flex-col gap-[9px]">
              <EventsPanel />
              <CategoriesPanel />
            </div>
          </div>
          <ConsolePanel />
        </div>
        <DataServicesPanel />
      </main>
      <footer className="flex h-[29px] shrink-0 items-center justify-between border-t-2 border-[#8f9096] bg-[#dddee3] pl-[7px] font-['Liberation_Sans',Arial,sans-serif] text-[15px] font-bold shadow-[inset_0_3px_2px_#b4b5ba]">
        <span className="pt-0.5">2024-04-08 00:33:06:329 [INFO] Messages found 0</span>
        <svg viewBox="0 0 12 12" className="size-3 self-end" aria-hidden="true">
          <path d="M9 0h2v2H9zM5 5h2v2H5zM9 5h2v2H9zM1 10h2v2H1zM5 10h2v2H5zM9 10h2v2H9z" fill="#b5b3a3" />
        </svg>
      </footer>
    </div>
  );
}
